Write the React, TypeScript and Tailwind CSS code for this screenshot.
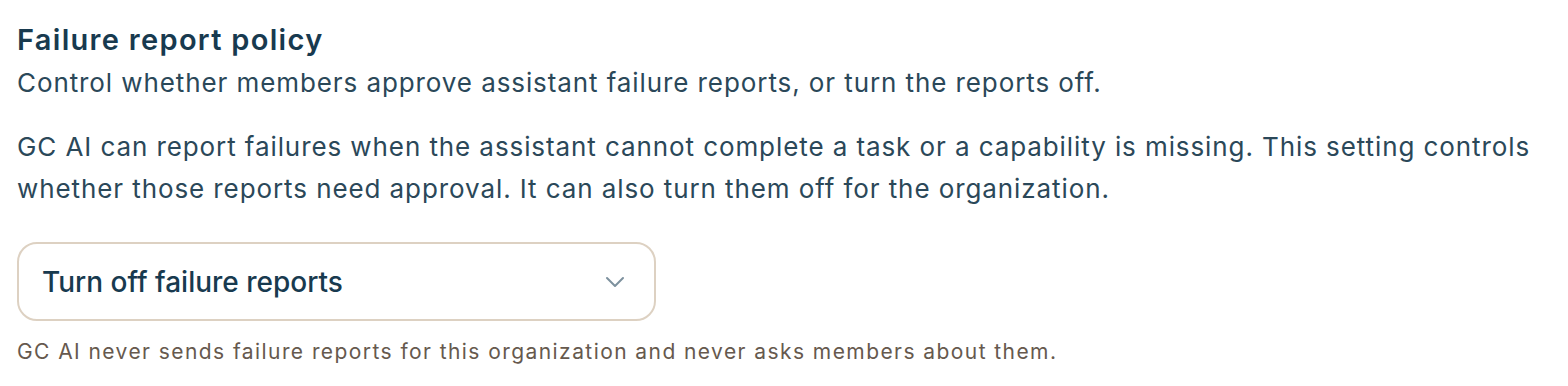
import { ChevronDown } from "lucide-react";

export default function App() {
  return (
    <div
      className="min-h-screen bg-white pl-[17px] pr-[10px] pt-[22px]"
      style={{ fontFamily: "Inter, 'Noto Sans', sans-serif" }}
    >
      <h2 className="text-[29px] font-semibold leading-[36px] tracking-[0.045em] text-[#183a4f]">
        Failure report policy
      </h2>
      <p className="mt-[5px] text-[26px] leading-[40px] tracking-[0.035em] text-[#2b4859]">
        Control whether members approve assistant failure reports, or turn the reports off.
      </p>
      <p className="mt-[23px] text-[26px] leading-[42px] tracking-[0.035em] text-[#2b4859]">
        GC AI can report failures when the assistant cannot complete a task or a capability is
        missing. This setting controls whether those reports need approval. It can also turn them
        off for the organization.
      </p>

      <button className="mt-[32px] flex h-[79px] w-[639px] items-center justify-between rounded-[20px] border-2 border-[#ddd1c2] bg-white pl-[23px] pr-[23px] text-left">
        <span className="text-[28px] font-medium text-[#183a4f]">Turn off failure reports</span>
        <ChevronDown className="h-[32px] w-[32px] text-[#7d919e]" strokeWidth={1.5} />
      </button>

      <p className="mt-[17px] text-[21px] leading-[28px] tracking-[0.068em] text-[#66594e]">
        GC AI never sends failure reports for this organization and never asks members about them.
      </p>
    </div>
  );
}
